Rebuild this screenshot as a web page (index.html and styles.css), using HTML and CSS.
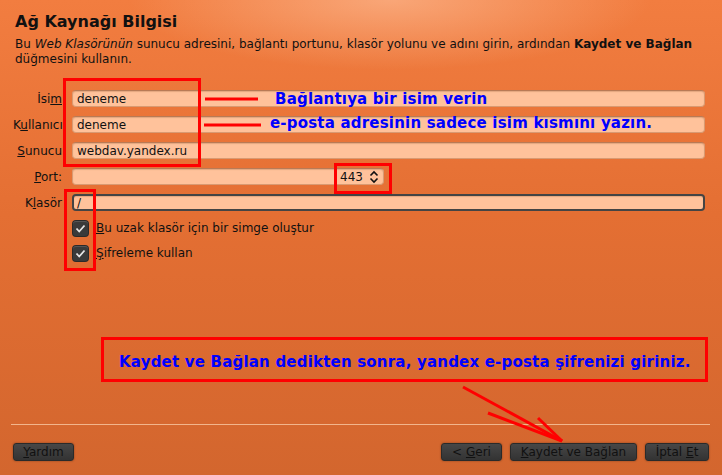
FILE: index.html
```html
<!DOCTYPE html>
<html lang="tr">
<head>
    <meta charset="UTF-8">
    <title>Ağ Kaynağı Bilgisi</title>
    <link rel="stylesheet" href="styles.css">
</head>
<body>
    <div class="dialog">
        <h1 class="title">Ağ Kaynağı Bilgisi</h1>
        <p class="intro">Bu <em>Web Klasörünün</em> sunucu adresini, bağlantı portunu, klasör yolunu ve adını girin, ardından <b>Kaydet ve Bağlan</b> düğmesini kullanın.</p>

        <div class="form">
            <label class="lbl">İsi<u>m</u></label>
            <div class="field">deneme</div>

            <label class="lbl">K<u>u</u>llanıcı</label>
            <div class="field">deneme</div>

            <label class="lbl"><u>S</u>unucu</label>
            <div class="field">webdav.yandex.ru</div>

            <label class="lbl"><u>P</u>ort:</label>
            <div class="field spin">
                <span>443</span>
                <svg width="10" height="14" viewBox="0 0 10 14"><path d="M1.5 5.5 L5 2 L8.5 5.5 M1.5 8.5 L5 12 L8.5 8.5" fill="none" stroke="#111" stroke-width="1.6"/></svg>
            </div>

            <label class="lbl">K<u>l</u>asör</label>
            <div class="field focus">/</div>

            <span></span>
            <label class="check">
                <span class="box"><svg width="15" height="15" viewBox="0 0 15 15"><path d="M3.5 7.5 L6.2 10.5 L11.5 4.5" fill="none" stroke="#e6e6e6" stroke-width="1.8"/></svg></span>
                <span><u>B</u>u uzak klasör için bir simge oluştur</span>
            </label>

            <span></span>
            <label class="check">
                <span class="box"><svg width="15" height="15" viewBox="0 0 15 15"><path d="M3.5 7.5 L6.2 10.5 L11.5 4.5" fill="none" stroke="#e6e6e6" stroke-width="1.8"/></svg></span>
                <span><u>Ş</u>ifreleme kullan</span>
            </label>
        </div>

        <hr class="sep">

        <div class="buttons">
            <button><u>Y</u>ardım</button>
            <span class="grow"></span>
            <button class="b-back">&lt; <u>G</u>eri</button>
            <button class="b-save"><u>K</u>aydet ve Bağlan</button>
            <button class="b-cancel">İptal <u>E</u>t</button>
        </div>

        <!-- notlar -->
        <div class="mark m-names"></div>
        <div class="mark m-port"></div>
        <div class="mark m-checks"></div>
        <div class="mark m-note"></div>
        <div class="note n-name">Bağlantıya bir isim verin</div>
        <div class="note n-user">e-posta adresinin sadece isim kısmını yazın.</div>
        <div class="note n-save">Kaydet ve Bağlan dedikten sonra, yandex e-posta şifrenizi giriniz.</div>
        <svg class="arrows" width="722" height="475" viewBox="0 0 722 475">
            <g stroke="#ff0000" stroke-width="3" fill="none">
                <line x1="205" y1="99" x2="258" y2="99"/>
                <line x1="204" y1="125" x2="261" y2="125"/>
                <line x1="463" y1="387" x2="562" y2="441"/>
                <line x1="488" y1="413" x2="562" y2="441"/>
                <line x1="538" y1="418" x2="562" y2="441"/>
            </g>
        </svg>
    </div>
</body>
</html>
```

FILE: styles.css
```css
body {
    margin: 0;
    font-family: "DejaVu Sans", sans-serif;
    font-size: 12px;
    color: #111;
}

.dialog {
    position: relative;
    width: 722px;
    height: 475px;
    box-sizing: border-box;
    padding: 12px 0 0;
    overflow: hidden;
    background:
        radial-gradient(ellipse 260px 70px at 390px 0, rgba(255, 200, 165, 0.55), rgba(255, 200, 165, 0)),
        linear-gradient(#f27d40, #e46f33 45%, #d3662e);
}

.title {
    margin: 0 0 0 15px;
    font-size: 16px;
    line-height: 20px;
    font-weight: bold;
}

.intro {
    margin: 5px 15px 0 15px;
    line-height: 15px;
}

.form {
    display: grid;
    grid-template-columns: 49px 1fr;
    column-gap: 10px;
    row-gap: 9px;
    margin: 23px 17px 0 13px;
    align-items: center;
}

.lbl {
    text-align: right;
    white-space: nowrap;
}

.field {
    height: 17px;
    box-sizing: border-box;
    padding: 0 4px;
    line-height: 16px;
    background: #ffc29b;
    border: 1px solid #d99a72;
    border-top-color: #b97a55;
    border-radius: 4px;
    box-shadow: inset 0 1px 1px rgba(120, 60, 20, 0.2);

    &.spin {
        width: 312px;
        display: flex;
        justify-content: flex-end;
        align-items: center;
        gap: 6px;
        padding-right: 4px;
    }

    &.focus {
        border: 2px solid #444;
        line-height: 14px;
        padding-left: 3px;
    }
}

.check {
    display: flex;
    align-items: center;
    gap: 8px;
    height: 16px;
    margin-left: 1px;

    .box {
        width: 15px;
        height: 15px;
        border-radius: 3px;
        background: #3a3a3a;
        box-shadow: 0 0 0 1px #2a2a2a, inset 0 1px 0 #555;
    }
    svg {
        display: block;
    }
}

.sep {
    margin: 163px 12px 0 11px;
    border: 0;
    height: 1px;
    background: #f2b58c;
}

.buttons {
    display: flex;
    margin: 18px 13px 0 13px;
    gap: 8px;

    .grow {
        flex-grow: 1;
    }

    button {
        height: 18px;
        box-sizing: border-box;
        padding: 0;
        white-space: nowrap;
        text-align: center;
        font-family: "DejaVu Sans", sans-serif;
        font-size: 12px;
        line-height: 15px;
        color: #111;
        background: linear-gradient(#474747, #333);
        border: 1px solid #2a2a2a;
        border-radius: 3px;
        box-shadow: 0 0 2px rgba(0, 0, 0, 0.4);
    }
    button:first-child {
        width: 61px;
    }
    .b-back {
        width: 61px;
    }
    .b-save {
        width: 127px;
    }
    .b-cancel {
        width: 64px;
    }
}

/* kırmızı işaretler ve notlar */
.mark {
    position: absolute;
    border: 3px solid #ff0000;
    box-sizing: border-box;
}
.m-names {
    left: 63px;
    top: 78px;
    width: 138px;
    height: 89px;
}
.m-port {
    left: 334px;
    top: 163px;
    width: 58px;
    height: 31px;
}
.m-checks {
    left: 64px;
    top: 189px;
    width: 32px;
    height: 82px;
}
.m-note {
    left: 101px;
    top: 337px;
    width: 607px;
    height: 45px;
}

.note {
    position: absolute;
    color: #0000ff;
    font-weight: bold;
    font-size: 15px;
    letter-spacing: 0.2px;
    line-height: 18px;
    white-space: nowrap;
}
.n-name {
    left: 275px;
    top: 90px;
}
.n-user {
    left: 270px;
    top: 114px;
}
.n-save {
    left: 119px;
    top: 353px;
}

.arrows {
    position: absolute;
    left: 0;
    top: 0;
    pointer-events: none;
}
```
